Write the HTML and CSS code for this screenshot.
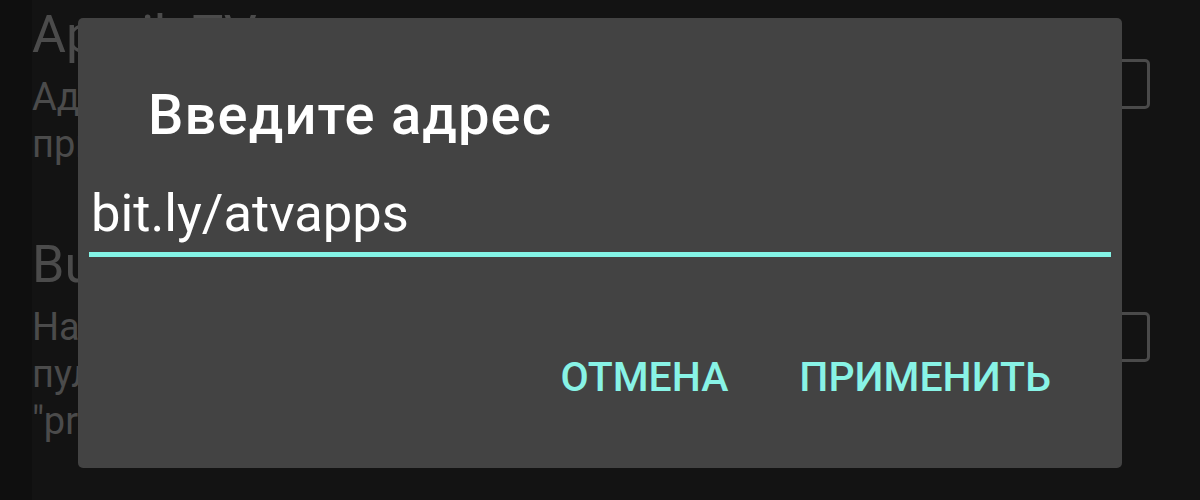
FILE: index.html
```html
<!DOCTYPE html>
<html lang="ru">
<head>
<meta charset="utf-8">
<title>Введите адрес</title>
<link rel="stylesheet" href="styles.css">
</head>
<body>
<div class="screen">
  <div class="list">
    <div class="item first">
      <div class="texts">
        <div class="item-title">Apptik TV</div>
        <div class="item-sum">Адрес сервера для загрузки</div>
        <div class="item-sum">приложений на телевизор</div>
      </div>
      <div class="check"></div>
    </div>
    <div class="item">
      <div class="texts">
        <div class="item-title">Built-in browser</div>
        <div class="item-sum">Нажмите кнопку на</div>
        <div class="item-sum">пульте, чтобы открыть</div>
        <div class="item-sum">"programs"</div>
      </div>
      <div class="check"></div>
    </div>
  </div>

  <div class="dialog">
    <div class="dialog-title">Введите адрес</div>
    <div class="field">bit.ly/atvapps</div>
    <div class="actions">
      <span class="btn">ОТМЕНА</span>
      <span class="btn">ПРИМЕНИТЬ</span>
    </div>
  </div>
</div>
</body>
</html>
```

FILE: styles.css
```css
html, body {
  margin: 0;
  padding: 0;
}
body {
  width: 1200px;
  height: 500px;
  overflow: hidden;
  background: #0f0f0f;
  font-family: Roboto, "Noto Sans", sans-serif;
}
.screen {
  position: relative;
  width: 1200px;
  height: 500px;
  padding-left: 32px;
  box-sizing: border-box;
}
.list {
  background: #131313;
  height: 100%;
  padding-top: 5px;
  box-sizing: border-box;
  display: flex;
  flex-direction: column;
  gap: 67px;
}
.item {
  display: flex;
  align-items: center;
  justify-content: space-between;
  padding-right: 50px;
}
.texts {
  display: flex;
  flex-direction: column;
  white-space: nowrap;
}
.item-title {
  font-size: 52px;
  line-height: 60px;
  color: #4b4b4b;
  margin-bottom: 9px;
}
.item-sum {
  font-size: 38px;
  line-height: 47px;
  color: #4b4b4b;
}
.check {
  width: 50px;
  height: 50px;
  box-sizing: border-box;
  border: 3px solid #4a4a4a;
  border-radius: 5px;
  flex-shrink: 0;
  margin-bottom: 6px;
}
.dialog {
  position: absolute;
  left: 78px;
  top: 18px;
  width: 1044px;
  height: 450px;
  background: #434343;
  border-radius: 5px;
  box-sizing: border-box;
  padding: 66px 11px 0 11px;
  display: flex;
  flex-direction: column;
}
.dialog-title {
  font-size: 56px;
  line-height: 62px;
  font-weight: 500;
  letter-spacing: 1.2px;
  color: #ffffff;
  padding-left: 59px;
}
.field {
  margin-top: 37px;
  font-size: 52.5px;
  line-height: 60px;
  color: #ffffff;
  padding-left: 2px;
  padding-bottom: 9px;
  border-bottom: 5px solid #84f4e6;
}
.actions {
  margin-top: 96px;
  display: flex;
  justify-content: flex-end;
  gap: 71px;
  padding-right: 60px;
}
.btn {
  font-size: 41px;
  line-height: 49px;
  font-weight: 500;
  color: #88f3e6;
}
```
